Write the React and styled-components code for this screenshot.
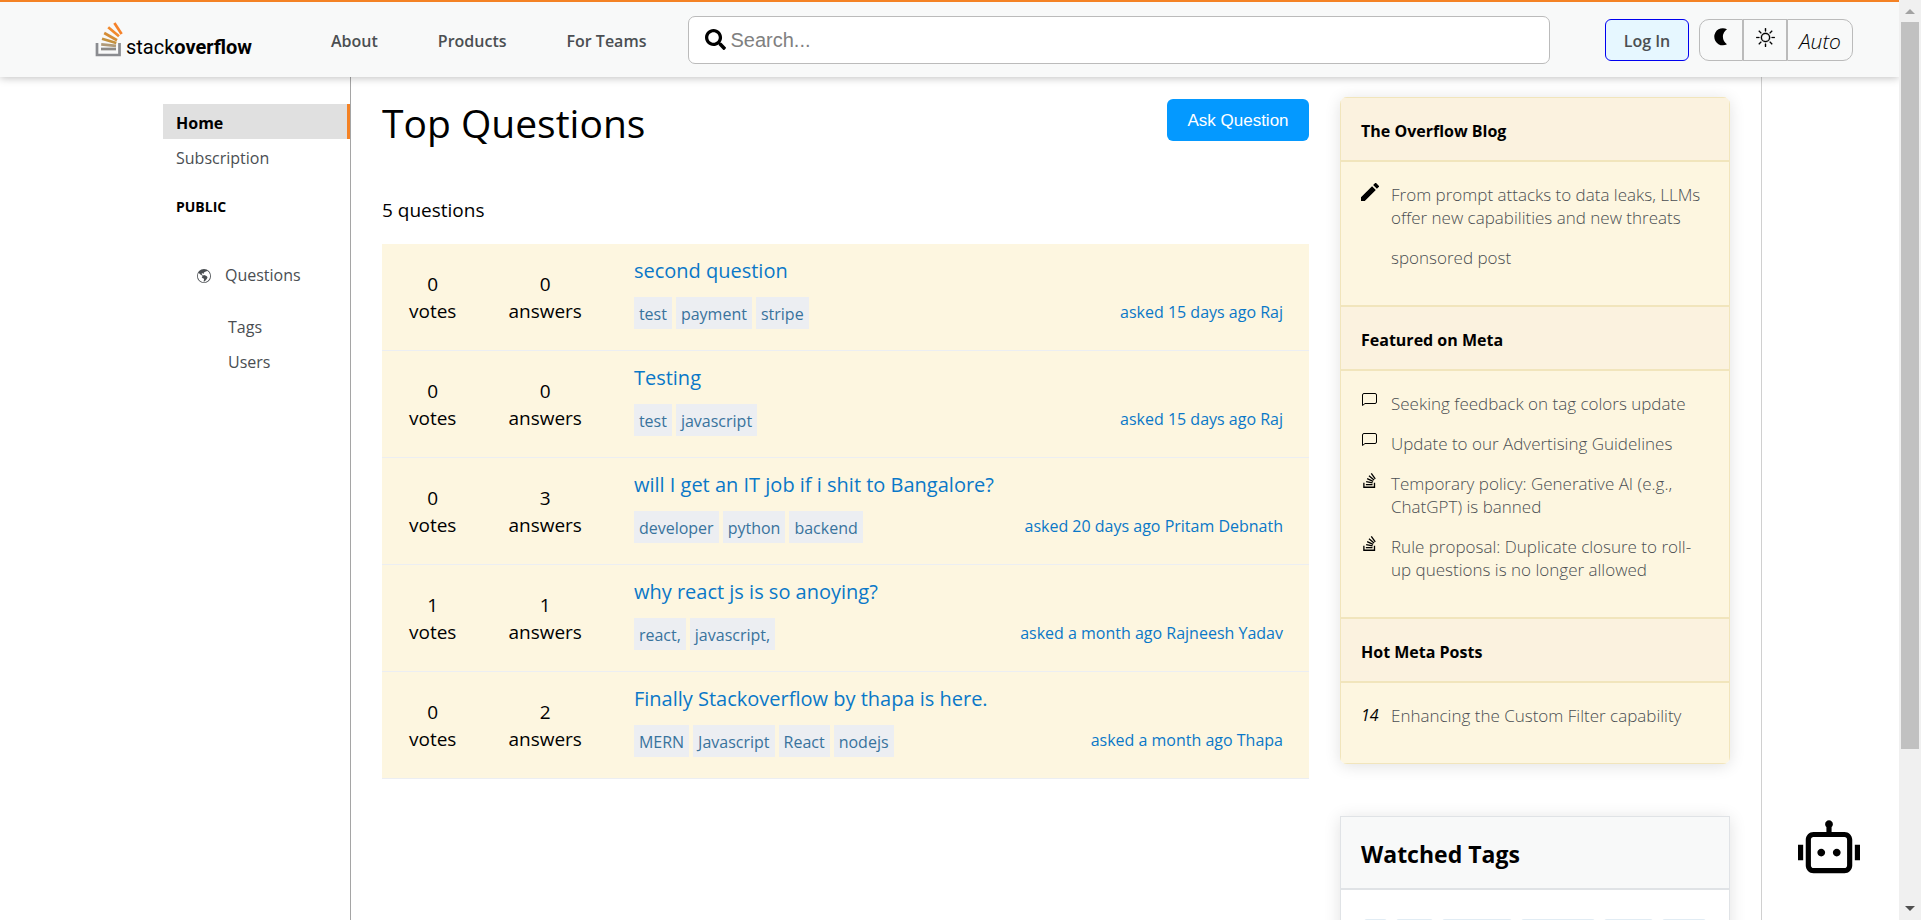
import React from "react";
import styled, { createGlobalStyle, css } from "styled-components";
import { FaSearch, FaStackOverflow } from "react-icons/fa";
import { BsGlobeAmericas, BsSun } from "react-icons/bs";
import { MdEdit } from "react-icons/md";
import { RiRobot2Line } from "react-icons/ri";

const colors = {
  orange: "#f48225",
  link: "#0a78c8",
  cream: "#fdf6e0",
  creamHead: "#fbf2df",
  creamLine: "#f1e5bc",
  greyHead: "#f8f9f9",
  line: "#e0e3e6",
};

const GlobalStyle = createGlobalStyle`
  *, *::before, *::after { box-sizing: border-box; }
  body {
    margin: 0;
    background: #fff;
    color: #000;
    font-family: "Open Sans", "Noto Sans", sans-serif;
    font-size: 16px;
    font-weight: 400;
  }
  h1, h2, p, ul { margin: 0; padding: 0; }
  ul { list-style: none; }
  a { color: inherit; text-decoration: none; }
  button { font-family: inherit; cursor: pointer; }
`;

const Window = styled.div`
  display: grid;
  grid-template-columns: minmax(0, 1fr) 22px;
  height: 100vh;
  overflow: hidden;
`;

const Page = styled.div`
  display: flex;
  flex-direction: column;
  min-height: 0;
  overflow: hidden;
`;

/* Header */

const Header = styled.header`
  display: flex;
  align-items: center;
  flex: none;
  height: 77px;
  padding: 0 46px 0 95px;
  border-top: 2px solid ${colors.orange};
  background: ${colors.greyHead};
  box-shadow: 0 1px 8px rgba(0, 0, 0, 0.25);
  z-index: 1;
`;

const Logo = styled.a`
  display: flex;
  align-items: flex-end;
  gap: 2px;
  width: 236px;
  svg { display: block; flex: none; }
`;

const LogoName = styled.span`
  font-family: Roboto, sans-serif;
  font-size: 20px;
  font-weight: 400;
  line-height: 20px;
  b { font-weight: 700; }
`;

const Menu = styled.nav`
  display: flex;
  gap: 60px;
  margin-right: 42px;
  padding-top: 2px;
  color: #4b4f52;
  font-weight: 600;
`;

const SearchBox = styled.label`
  display: flex;
  align-items: center;
  flex: 1;
  gap: 4px;
  height: 48px;
  margin-right: 55px;
  padding: 0 16px;
  border: 1px solid #bbb;
  border-radius: 7px;
  background: #fff;
`;

const SearchInput = styled.input`
  flex: 1;
  min-width: 0;
  border: 0;
  outline: 0;
  padding: 2px 0 0;
  font-family: "Liberation Sans", sans-serif;
  font-size: 20px;
  &::placeholder { color: #808080; }
`;

const LoginButton = styled.button`
  width: 84px;
  height: 42px;
  margin-right: 10px;
  padding: 2px 0 0;
  border: 1px solid #0000f0;
  border-radius: 6px;
  background: #e6f7ff;
  color: #4b4f52;
  font-size: 16px;
  font-weight: 600;
`;

const ThemeSwitch = styled.div`
  display: flex;
`;

const ThemeButton = styled.button`
  display: flex;
  align-items: center;
  justify-content: center;
  width: ${(p) => (p.$wide ? 66 : 44)}px;
  height: 42px;
  padding: ${(p) => (p.$wide ? "2px 0 0" : "0 0 5px")};
  border: 1px solid #bbb;
  background: transparent;
  color: #000;
  font-size: 21px;
  font-style: italic;
  font-weight: 300;
  &:first-child { border-radius: 10px 0 0 10px; }
  &:last-child { border-radius: 0 10px 10px 0; }
`;

/* Columns */

const Columns = styled.div`
  display: flex;
  flex: 1;
  min-height: 0;
  padding: 0 137px 0 163px;
`;

const SideNav = styled.nav`
  flex: none;
  width: 188px;
  padding-top: 27px;
  border-right: 1px solid #a5a5a5;
  color: #4a4e52;
`;

const NavLink = styled.a`
  display: block;
  height: 35px;
  padding-left: ${(p) => (p.$nested ? 65 : 13)}px;
  line-height: ${(p) => (p.$nested ? 35 : 38)}px;
  ${(p) =>
    p.$active &&
    css`
      border-right: 3px solid ${colors.orange};
      background: #e0e0e0;
      color: #000;
      font-weight: 700;
    `}
`;

const NavHeading = styled.h2`
  padding: 21px 0 39px 13px;
  color: #000;
  font-size: 14px;
  font-weight: 700;
  line-height: 24px;
`;

const NavIconLink = styled.a`
  display: flex;
  align-items: center;
  gap: 14px;
  padding: 0 0 17px 34px;
  line-height: 35px;
`;

const Content = styled.div`
  display: flex;
  align-items: flex-start;
  flex: 1;
  gap: 31px;
  min-width: 0;
  padding: 0 31px;
  border-right: 1px solid #d0d0d0;
`;

const Main = styled.main`
  flex: 1;
  min-width: 0;
  padding-top: 20px;
`;

const TitleBar = styled.div`
  display: flex;
  align-items: flex-start;
  justify-content: space-between;
  h1 {
    font-size: 39px;
    font-weight: 400;
    line-height: 52px;
  }
`;

const AskButton = styled.button`
  width: 142px;
  height: 42px;
  margin-top: 2px;
  padding: 2px 0 0;
  border: 0;
  border-radius: 6px;
  background: #0499ff;
  color: #fff;
  font-family: "Liberation Sans", sans-serif;
  font-size: 17px;
`;

const Count = styled.p`
  margin: 48px 0 20px;
  font-size: 19px;
  line-height: 27px;
`;

const Question = styled.li`
  display: flex;
  gap: 52px;
  height: 107px;
  padding: 13px 26px 0 27px;
  border-bottom: 1px solid #eceef2;
  background: ${colors.cream};
`;

const Stat = styled.div`
  display: flex;
  flex-direction: column;
  align-items: center;
  padding-top: 14px;
  font-size: 19px;
  line-height: 27px;
`;

const Summary = styled.div`
  flex: 1;
  min-width: 0;
`;

const QuestionTitle = styled.a`
  color: ${colors.link};
  font-size: 20px;
  line-height: 27px;
`;

const Details = styled.div`
  display: flex;
  justify-content: space-between;
  margin-top: 13px;
  line-height: 32px;
`;

const TagList = styled.div`
  display: flex;
  gap: 4px;
`;

const Tag = styled.a`
  height: 32px;
  padding: 1px 5px 0;
  background: #eceef2;
  color: #39739d;
`;

const Asked = styled.span`
  color: ${colors.link};
  line-height: 30px;
`;

/* Right column */

const Aside = styled.aside`
  display: flex;
  flex: none;
  flex-direction: column;
  gap: 52px;
  width: 390px;
  padding-top: 20px;
`;

const Card = styled.section`
  overflow: hidden;
  border-radius: ${(p) => (p.$plain ? 0 : 7)}px;
  box-shadow: 0 2px 16px rgba(0, 0, 0, 0.12);
`;

const CardHead = styled.h2`
  padding: 4px 20px 0;
  border: 1px solid ${(p) => (p.$plain ? colors.line : colors.creamLine)};
  background: ${(p) => (p.$plain ? colors.greyHead : colors.creamHead)};
  font-size: ${(p) => (p.$plain ? 23 : 16)}px;
  font-weight: 700;
  line-height: ${(p) => (p.$plain ? 67 : 58)}px;
`;

const CardBody = styled.ul`
  display: flex;
  flex-direction: column;
  gap: 17px;
  padding: 21px 20px 36px;
  border: 1px solid ${colors.creamLine};
  background: ${colors.cream};
  color: #4a4e52;
  font-size: 17px;
  font-weight: 300;
  line-height: 23px;
`;

const CardItem = styled.li`
  display: grid;
  grid-template-columns: 18px minmax(0, 1fr);
  gap: 12px;
  svg { display: block; color: #000; }
  i { color: #000; font-size: 16px; font-weight: 400; }
  a { grid-column: 2; }
`;

const WatchedList = styled.div`
  display: flex;
  gap: 9px;
  padding: 29px 23px;
  border: 1px solid ${colors.line};
`;

const WatchedTag = styled.span`
  width: ${(p) => p.$width}px;
  height: 32px;
  border-radius: 3px;
  background: #e1ecf4;
`;

/* Window furniture */

const Scrollbar = styled.div`
  display: flex;
  flex-direction: column;
  align-items: center;
  justify-content: space-between;
  padding: 9px 0;
  background: #f0f0f0;
`;

const Arrow = styled.span`
  border: 5px solid transparent;
  border-top-width: ${(p) => (p.$up ? 0 : 5)}px;
  border-bottom-width: ${(p) => (p.$up ? 5 : 0)}px;
  border-top-color: #505050;
  border-bottom-color: #a3a3a3;
`;

const Track = styled.div`
  display: flex;
  flex: 1;
  flex-direction: column;
  width: 18px;
  margin: 8px 0;
  &::before {
    content: "";
    height: 83%;
    background: #c1c1c1;
  }
`;

const ChatButton = styled.button`
  position: fixed;
  right: 61px;
  bottom: 39px;
  padding: 0;
  border: 0;
  background: none;
  color: #000;
  svg { display: block; }
`;

function LogoMark() {
  return (
    <svg width="29" height="35" viewBox="0 0 29 35" fill="none" strokeWidth="2.7">
      <path d="M2 21V33H24.500V21" stroke="#8a8c90" />
      <path d="M6 27H21" stroke="#8d8a86" />
      <path d="M6.200 22.300 21 23.800" stroke="#b09a78" />
      <path d="M7 16.800 21.300 21" stroke="#c4913f" />
      <path d="M9.200 11 22 18.200" stroke="#d58c35" />
      <path d="M13.200 5.200 24 14.300" stroke="#f18a2e" />
      <path d="M19.400 1 26.600 12" stroke="#f5822a" />
    </svg>
  );
}

function MoonIcon() {
  return (
    <svg width="18" height="18" viewBox="0 0 18 18" fill="currentColor">
      <path d="M15 1.200A9 9 0 0 0 15 16.300 8.600 8.600 0 1 1 15 1.200Z" />
    </svg>
  );
}

function CommentIcon() {
  return (
    <svg width="17" height="16" viewBox="0 0 17 16" fill="none" stroke="currentColor">
      <path d="M1.500 13.500V3Q1.500 1.500 3 1.500H14Q15.500 1.500 15.500 3V10Q15.500 11.500 14 11.500H4Z" />
    </svg>
  );
}

const questions = [
  { votes: 0, answers: 0, title: "second question", tags: ["test", "payment", "stripe"], asked: "asked 15 days ago Raj" },
  { votes: 0, answers: 0, title: "Testing", tags: ["test", "javascript"], asked: "asked 15 days ago Raj" },
  { votes: 0, answers: 3, title: "will I get an IT job if i shit to Bangalore?", tags: ["developer", "python", "backend"], asked: "asked 20 days ago Pritam Debnath" },
  { votes: 1, answers: 1, title: "why react js is so anoying?", tags: ["react,", "javascript,"], asked: "asked a month ago Rajneesh Yadav" },
  { votes: 0, answers: 2, title: "Finally Stackoverflow by thapa is here.", tags: ["MERN", "Javascript", "React", "nodejs"], asked: "asked a month ago Thapa" },
];

const sections = [
  {
    title: "The Overflow Blog",
    items: [
      {
        icon: <MdEdit size={18} viewBox="3 3 18 18" />,
        text: "From prompt attacks to data leaks, LLMs offer new capabilities and new threats",
      },
      { text: "sponsored post" },
    ],
  },
  {
    title: "Featured on Meta",
    items: [
      { icon: <CommentIcon />, text: "Seeking feedback on tag colors update" },
      { icon: <CommentIcon />, text: "Update to our Advertising Guidelines" },
      { icon: <FaStackOverflow size={17} />, text: "Temporary policy: Generative AI (e.g., ChatGPT) is banned" },
      { icon: <FaStackOverflow size={17} />, text: "Rule proposal: Duplicate closure to roll-up questions is no longer allowed" },
    ],
  },
  {
    title: "Hot Meta Posts",
    items: [{ icon: <i>14</i>, text: "Enhancing the Custom Filter capability" }],
  },
];

const watchedWidths = [23, 38, 70, 75, 50, 44];

export default function App() {
  return (
    <Window>
      <GlobalStyle />
      <Page>
        <Header>
          <Logo href="#">
            <LogoMark />
            <LogoName>
              stack<b>overflow</b>
            </LogoName>
          </Logo>
          <Menu>
            <a href="#about">About</a>
            <a href="#products">Products</a>
            <a href="#teams">For Teams</a>
          </Menu>
          <SearchBox>
            <FaSearch size={21} aria-hidden="true" />
            <SearchInput type="text" placeholder="Search..." aria-label="Search" />
          </SearchBox>
          <LoginButton>Log In</LoginButton>
          <ThemeSwitch>
            <ThemeButton aria-label="Dark"><MoonIcon /></ThemeButton>
            <ThemeButton aria-label="Light"><BsSun size={19} strokeWidth="0.2" /></ThemeButton>
            <ThemeButton $wide>Auto</ThemeButton>
          </ThemeSwitch>
        </Header>
        <Columns>
          <SideNav>
            <NavLink href="#home" $active>Home</NavLink>
            <NavLink href="#subscription">Subscription</NavLink>
            <NavHeading>PUBLIC</NavHeading>
            <NavIconLink href="#questions">
              <BsGlobeAmericas size={14} />
              Questions
            </NavIconLink>
            <NavLink href="#tags" $nested>Tags</NavLink>
            <NavLink href="#users" $nested>Users</NavLink>
          </SideNav>
          <Content>
            <Main>
              <TitleBar>
                <h1>Top Questions</h1>
                <AskButton>Ask Question</AskButton>
              </TitleBar>
              <Count>5 questions</Count>
              <ul>
                {questions.map((q) => (
                  <Question key={q.title}>
                    <Stat>
                      <span>{q.votes}</span>
                      <span>votes</span>
                    </Stat>
                    <Stat>
                      <span>{q.answers}</span>
                      <span>answers</span>
                    </Stat>
                    <Summary>
                      <QuestionTitle href="#question">{q.title}</QuestionTitle>
                      <Details>
                        <TagList>
                          {q.tags.map((t) => (
                            <Tag key={t} href="#tag">{t}</Tag>
                          ))}
                        </TagList>
                        <Asked>{q.asked}</Asked>
                      </Details>
                    </Summary>
                  </Question>
                ))}
              </ul>
            </Main>
            <Aside>
              <Card>
                {sections.map((s) => (
                  <React.Fragment key={s.title}>
                    <CardHead>{s.title}</CardHead>
                    <CardBody>
                      {s.items.map((item) => (
                        <CardItem key={item.text}>
                          {item.icon}
                          <a href="#post">{item.text}</a>
                        </CardItem>
                      ))}
                    </CardBody>
                  </React.Fragment>
                ))}
              </Card>
              <Card $plain>
                <CardHead $plain>Watched Tags</CardHead>
                <WatchedList>
                  {watchedWidths.map((w) => (
                    <WatchedTag key={w} $width={w} />
                  ))}
                </WatchedList>
              </Card>
            </Aside>
          </Content>
        </Columns>
      </Page>
      <Scrollbar aria-hidden="true">
        <Arrow $up />
        <Track />
        <Arrow />
      </Scrollbar>
      <ChatButton aria-label="Open chat">
        <RiRobot2Line size={62} />
      </ChatButton>
    </Window>
  );
}
